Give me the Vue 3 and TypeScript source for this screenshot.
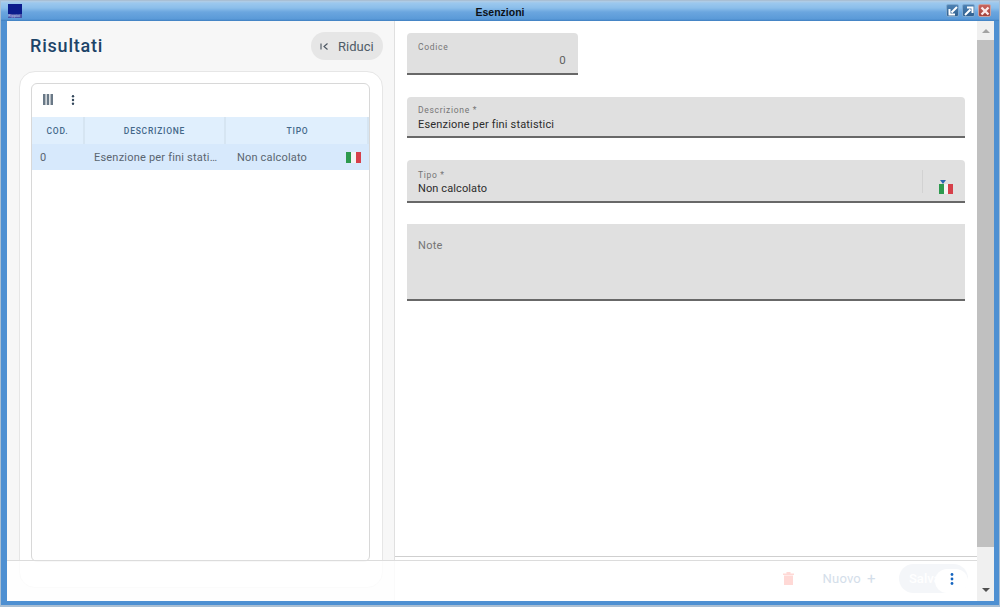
<script setup lang="ts">
const columns: { label: string; cls: string }[] = [
  { label: 'COD.', cls: 'c-cod' },
  { label: 'DESCRIZIONE', cls: 'c-desc' },
  { label: 'TIPO', cls: 'c-tipo' },
]
</script>

<template>
  <div class="window">
    <header class="titlebar">
      <div class="logo"><span class="logo-text">Rippici</span></div>
      <div class="title">Esenzioni</div>
      <div class="win-btns">
        <span class="wbtn">
          <svg width="10" height="10" viewBox="0 0 10 10"><path d="M9 1 3.5 6.500M1.500 3v5.500H7" fill="none" stroke="#fff" stroke-width="2"/></svg>
        </span>
        <span class="wbtn">
          <svg width="10" height="10" viewBox="0 0 10 10"><path d="M1 9 6.500 3.500M3 1.500h5.500V7" fill="none" stroke="#fff" stroke-width="2"/></svg>
        </span>
        <span class="wbtn close">
          <svg width="10" height="10" viewBox="0 0 10 10"><path d="M1.500 1.500l7 7M8.500 1.500l-7 7" fill="none" stroke="#fbe9e9" stroke-width="2.400"/></svg>
        </span>
      </div>
    </header>

    <div class="frame">
      <div class="viewport">
        <aside class="left">
          <div class="left-head">
            <h1 class="heading">Risultati</h1>
            <button class="reduce">
              <svg width="9" height="9" viewBox="0 0 9 9"><path d="M1 1.500v6M7.500 1.500 4 4.500l3.500 3" fill="none" stroke="#4a5560" stroke-width="1.100"/></svg>
              <span>Riduci</span>
            </button>
          </div>
          <div class="card">
            <div class="grid">
              <div class="toolbar">
                <svg class="tool-cols" width="10" height="11" viewBox="0 0 10 11"><path d="M0 0h2.500v11H0zM3.700 0h2.500v11H3.700zM7.500 0H10v11H7.500z" fill="#6a7987"/></svg>
                <svg class="tool-dots" width="4" height="10" viewBox="0 0 4 10"><circle cx="2" cy="1.300" r="1.200" fill="#33475b"/><circle cx="2" cy="5" r="1.200" fill="#33475b"/><circle cx="2" cy="8.700" r="1.200" fill="#33475b"/></svg>
              </div>
              <div class="thead">
                <div v-for="col in columns" :key="col.label" class="th" :class="col.cls">{{ col.label }}</div>
              </div>
              <div class="trow">
                <div class="td c-cod">0</div>
                <div class="td c-desc desc-cell">Esenzione per fini stati…</div>
                <div class="td c-tipo tipo-cell">
                  <span>Non calcolato</span>
                  <span class="flag"><i class="g"></i><i class="w"></i><i class="r"></i></span>
                </div>
              </div>
            </div>
          </div>
        </aside>

        <main class="right">
          <div class="form">
            <div class="field codice">
              <label class="flabel">Codice</label>
              <div class="fvalue num">0</div>
            </div>
            <div class="field descr">
              <label class="flabel">Descrizione *</label>
              <div class="fvalue">Esenzione per fini statistici</div>
            </div>
            <div class="field tipo">
              <div class="tipo-main">
                <label class="flabel">Tipo *</label>
                <div class="fvalue">Non calcolato</div>
              </div>
              <div class="sep"></div>
              <div class="tipo-flag">
                <span class="caret"></span>
                <span class="flag"><i class="g"></i><i class="w"></i><i class="r"></i></span>
              </div>
            </div>
            <div class="field note">
              <label class="note-label">Note</label>
            </div>
          </div>
          <div class="right-rule"></div>
        </main>

        <footer class="footer">
          <svg class="trash" width="11" height="13" viewBox="0 0 11 13"><path d="M0 1.500h11V3H0zM3.500 0h4v1.500h-4zM1 3.500h9V13H1z" fill="#ffd9d6"/></svg>
          <span class="nuovo">Nuovo</span>
          <span class="plus">+</span>
          <div class="save"><span>Salva</span></div>
          <div class="more">
            <svg width="4" height="12" viewBox="0 0 4 12"><circle cx="2" cy="1.500" r="1.400" fill="#1565c0"/><circle cx="2" cy="6" r="1.400" fill="#1565c0"/><circle cx="2" cy="10.500" r="1.400" fill="#1565c0"/></svg>
          </div>
        </footer>

        <div class="scrollbar">
          <div class="arrow"><span class="up"></span></div>
          <div class="track"><div class="thumb"></div></div>
          <div class="arrow bottom"><span class="down"></span></div>
        </div>
      </div>
    </div>
  </div>
</template>

<style>
html, body { margin: 0; padding: 0; background: #fff; }
</style>

<style scoped>
.window {
  width: 1000px;
  height: 607px;
  display: flex;
  flex-direction: column;
  font-family: Roboto, "Liberation Sans", sans-serif;
  overflow: hidden;
  background: #4e90d2;
  box-sizing: border-box;
  border: 1px solid #a9bfd4;
  border-bottom-width: 2px;
}
.titlebar {
  height: 20px;
  flex: none;
  display: flex;
  align-items: center;
  position: relative;
  background: linear-gradient(#b4cde4 0, #9cc8ee 10%, #8bbeea 35%, #6ba6df 55%, #5a9ad8 90%, #3f7fc0 100%);
}
.logo {
  width: 14px;
  height: 14px;
  margin-left: 7px;
  align-self: flex-start;
  margin-top: 3px;
  background: #0b1c8c;
  position: relative;
  overflow: hidden;
}
.logo-text {
  position: absolute;
  left: 0;
  bottom: 0;
  width: 100%;
  font-size: 4px;
  line-height: 4px;
  color: #c9d0f0;
  background: #4a55a8;
  white-space: nowrap;
}
.title {
  position: absolute;
  left: 0;
  right: 0;
  top: 4px;
  text-align: center;
  font-family: "Liberation Sans", sans-serif;
  font-size: 10.500px;
  line-height: 15px;
  font-weight: 700;
  color: #0c1118;
}
.win-btns {
  margin-left: auto;
  margin-right: 8px;
  align-self: flex-start;
  margin-top: 3px;
  display: flex;
  gap: 3px;
}
.wbtn {
  width: 13px;
  height: 13px;
  box-sizing: border-box;
  border-radius: 2px;
  background: linear-gradient(#4d82b4, #2f5f8f);
  border: 1px solid #7ea8cf;
  display: flex;
  align-items: center;
  justify-content: center;
}
.wbtn svg { flex: none; }
.wbtn.close {
  background: linear-gradient(#c9665f, #a03f38);
  border-color: #c9a0a0;
}
.frame {
  flex: 1;
  min-height: 0;
  padding: 0 5px 4px 6px;
  display: flex;
}
.viewport {
  flex: 1;
  display: flex;
  position: relative;
  background: #fff;
  min-width: 0;
}
.left {
  width: 388px;
  flex: none;
  box-sizing: border-box;
  background: #f7f7f7;
  border-right: 1px solid #e0e0e0;
  padding: 11px 11px 0 12px;
  display: flex;
  flex-direction: column;
}
.left-head {
  height: 28px;
  display: flex;
  align-items: center;
  justify-content: space-between;
  padding-left: 11px;
  margin-bottom: 11px;
}
.heading {
  margin: 0;
  font-size: 18px;
  line-height: 28px;
  font-weight: 500;
  letter-spacing: 0.8px;
  color: #1d4468;
}
.reduce {
  width: 72px;
  height: 28px;
  border: 0;
  border-radius: 14px;
  background: #e6e6e6;
  display: flex;
  align-items: center;
  gap: 9px;
  padding: 0 0 0 9px;
  font-family: inherit;
  font-size: 13px;
  color: #4f5b66;
}
.card {
  height: 517px;
  box-sizing: border-box;
  background: #fff;
  border: 1px solid #e6e6e6;
  border-radius: 16px;
  padding: 11px 12px 0 11px;
}
.grid {
  height: 479px;
  box-sizing: border-box;
  border: 1px solid #d8d8d8;
  border-radius: 6px;
  background: #fff;
  display: flex;
  flex-direction: column;
  overflow: hidden;
}
.toolbar {
  height: 33px;
  box-sizing: border-box;
  flex: none;
  display: flex;
  align-items: center;
  padding: 0 0 2px 11px;
  gap: 18px;
}
.thead {
  height: 27px;
  flex: none;
  display: flex;
  background: #e0effd;
}
.th {
  box-sizing: border-box;
  display: flex;
  align-items: center;
  justify-content: center;
  font-size: 8.500px;
  font-weight: 500;
  letter-spacing: 0.75px;
  color: #44688a;
  border-right: 2px solid #d6e5f2;
}
.c-cod { width: 53px; flex: none; }
.c-desc { width: 141px; flex: none; }
.c-tipo { flex: 1; min-width: 0; }
.th.c-tipo { padding-left: 2px; }
.trow {
  height: 26px;
  flex: none;
  display: flex;
  background: #d7e9fc;
}
.td {
  box-sizing: border-box;
  display: flex;
  align-items: center;
  font-size: 11px;
  letter-spacing: 0.17px;
  color: #5a6570;
  white-space: nowrap;
}
.td.c-cod { padding-left: 8px; }
.desc-cell {
  padding: 0 0 0 9px;
  letter-spacing: 0.2px;
}
.tipo-cell {
  padding: 0 8px 0 11px;
  justify-content: space-between;
}
.flag {
  display: inline-flex;
  width: 15px;
  height: 11px;
  flex: none;
}
.flag i { flex: 1; display: block; }
.flag .g { background: #2d9a4e; }
.flag .w { background: #f4f4f4; }
.flag .r { background: #d6404a; }
.right {
  flex: 1;
  min-width: 0;
  display: flex;
  flex-direction: column;
  background: #fff;
}
.form {
  flex: 1;
  padding: 12px 12px 0;
  display: flex;
  flex-direction: column;
  gap: 22px;
}
.field {
  box-sizing: border-box;
  background: #e0e0e0;
  border-bottom: 2px solid #686868;
  border-radius: 4px 4px 0 0;
  padding: 0 11px 6px;
  height: 41px;
  display: flex;
  flex-direction: column;
  justify-content: flex-end;
}
.flabel {
  display: block;
  font-size: 8.500px;
  line-height: 11px;
  letter-spacing: 0.7px;
  color: #757575;
  margin-bottom: 1px;
}
.fvalue {
  font-size: 11px;
  line-height: 13px;
  letter-spacing: 0.17px;
  color: #2c2c2c;
}
.field.descr { padding-bottom: 5px; }
.descr .flabel { margin-bottom: 2px; }
.field.codice {
  width: 171px;
  height: 42px;
  padding-right: 12px;
}
.codice .flabel { margin-bottom: 0; }
.fvalue.num {
  text-align: right;
  color: #5f5f5f;
  font-size: 11.500px;
  line-height: 14px;
}
.field.tipo {
  height: 43px;
  flex-direction: row;
  align-items: flex-end;
  padding-bottom: 0;
  padding-right: 12px;
}
.tipo-main { flex: 1; padding-bottom: 6px; }
.tipo-main .fvalue { letter-spacing: 0.1px; }
.sep {
  width: 1px;
  height: 23px;
  background: #d2d2d2;
  margin-bottom: 8px;
}
.tipo-flag {
  width: 30px;
  display: flex;
  flex-direction: column;
  align-items: flex-end;
  padding-bottom: 7px;
}
.caret {
  width: 0;
  height: 0;
  border-left: 3px solid transparent;
  border-right: 3px solid transparent;
  border-top: 4px solid #2a66b0;
  margin-right: 7px;
}
.tipo-flag .flag { width: 14px; height: 10px; }
.field.note {
  height: 77px;
  margin-top: -1px;
  justify-content: flex-start;
  padding-top: 15px;
  border-radius: 0;
}
.note-label {
  font-size: 11px;
  line-height: 13px;
  letter-spacing: 0.3px;
  color: #757575;
}
.right-rule {
  flex: none;
  height: 1px;
  background: #cfcfcf;
  margin-bottom: 44px;
}
.footer {
  position: absolute;
  left: 0;
  right: 17px;
  bottom: 0;
  height: 41px;
  box-sizing: border-box;
  border-top: 1px solid #dcdcdc;
  background: rgba(255, 255, 255, 0.82);
  display: flex;
  align-items: center;
  padding: 0 9px 5px 0;
  font-size: 13px;
}
.trash { margin-left: auto; }
.nuovo {
  margin-left: 29px;
  color: #d4deea;
  letter-spacing: 0.2px;
}
.plus {
  margin-left: 6px;
  color: #d4deea;
  font-size: 15px;
}
.save {
  margin-left: 23.500px;
  width: 69px;
  height: 29px;
  border-radius: 15px;
  background: #f4f6f9;
  color: #fff;
  display: flex;
  align-items: center;
  padding-left: 10px;
  box-sizing: border-box;
  font-weight: 500;
}
.more {
  position: absolute;
  right: 9px;
  top: 8px;
  width: 33px;
  height: 24px;
  box-sizing: border-box;
  padding-bottom: 4px;
  border-radius: 12px;
  background: #fff;
  display: flex;
  align-items: center;
  justify-content: center;
}
.scrollbar {
  width: 17px;
  flex: none;
  background: #f0f0f0;
  display: flex;
  flex-direction: column;
}
.arrow {
  height: 19px;
  flex: none;
  display: flex;
  align-items: center;
  justify-content: center;
}
.arrow.bottom { height: 22px; }
.up {
  border-left: 4px solid transparent;
  border-right: 4px solid transparent;
  border-bottom: 4px solid #a3a3a3;
}
.down {
  border-left: 4px solid transparent;
  border-right: 4px solid transparent;
  border-top: 4px solid #505050;
}
.track { flex: 1; display: flex; flex-direction: column; }
.thumb {
  height: 507px;
  background: #c0c0c0;
}
</style>
